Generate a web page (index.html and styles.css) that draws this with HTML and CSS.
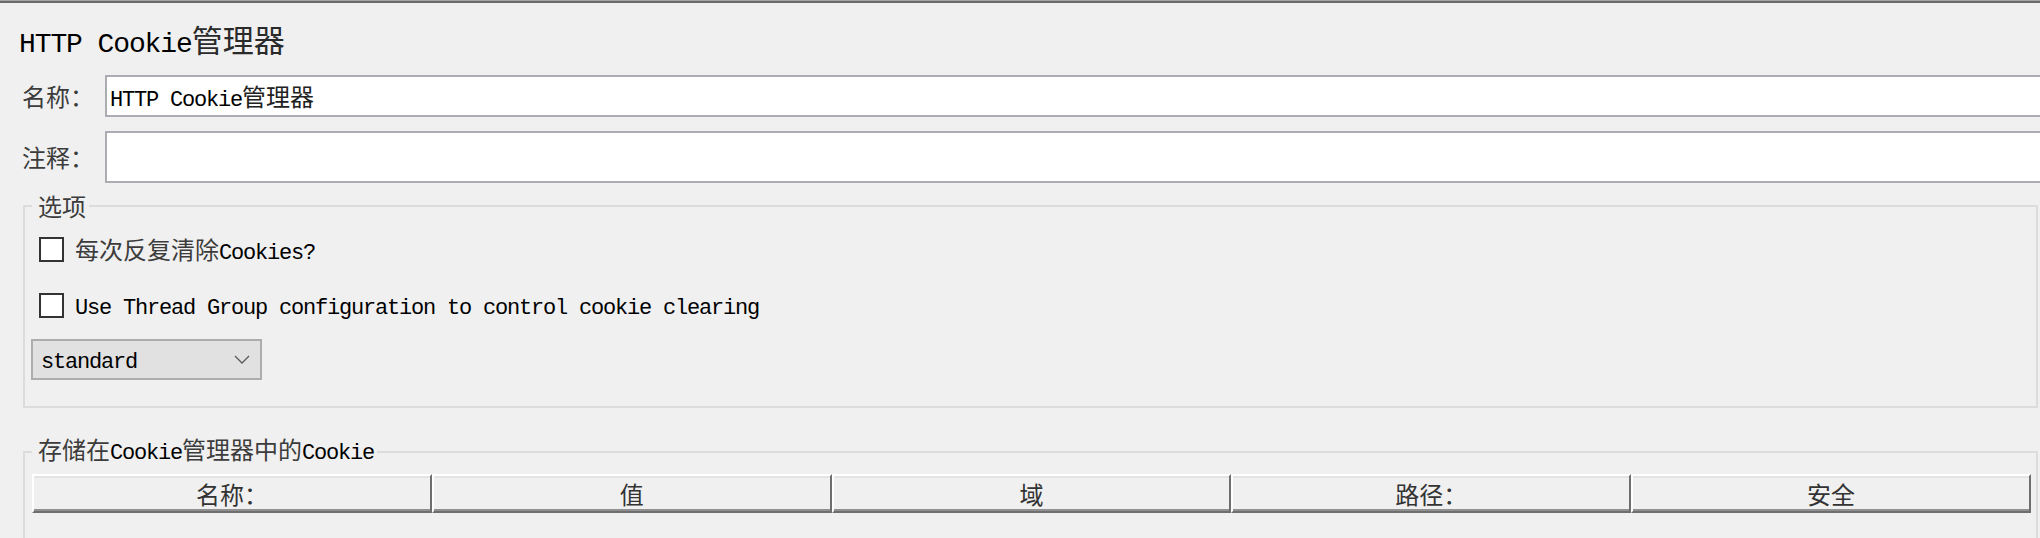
FILE: index.html
```html
<!DOCTYPE html>
<html lang="zh-CN">
<head>
<meta charset="utf-8">
<title>HTTP Cookie管理器</title>
<link rel="stylesheet" href="styles.css">
</head>
<body>
<div class="topline"></div>
<div class="title"><span class="t"><span>HTTP Cookie</span><span class="c">管理器</span></span></div>
<div class="row r1">
  <label class="lbl c">名称：</label>
  <div class="field"><span class="t"><span>HTTP Cookie</span><span class="c">管理器</span></span></div>
</div>
<div class="row r2">
  <label class="lbl c">注释：</label>
  <div class="field tall"></div>
</div>
<fieldset class="group g1">
  <legend class="c">选项</legend>
  <div class="check cb1"><span class="box"></span><span class="txt"><span class="c">每次反复清除</span><span>Cookies?</span></span></div>
  <div class="check cb2"><span class="box"></span><span class="txt lat">Use Thread Group configuration to control cookie clearing</span></div>
  <div class="combo"><span class="t lat">standard</span><svg class="chev" width="16" height="9" viewBox="0 0 16 9"><polyline points="1,1 8,8 15,1" fill="none" stroke="#5a5a5a" stroke-width="1.3"/></svg></div>
</fieldset>
<fieldset class="group g2">
  <legend><span class="c">存储在</span><span>Cookie</span><span class="c">管理器中的</span><span>Cookie</span></legend>
  <div class="thead">
    <div class="th c">名称：</div>
    <div class="th c">值</div>
    <div class="th c">域</div>
    <div class="th c">路径：</div>
    <div class="th c">安全</div>
  </div>
</fieldset>
</body>
</html>
```
FILE: styles.css
```css
html, body {
  margin: 0;
  padding: 0;
  width: 2040px;
  height: 538px;
  overflow: hidden;
  background: #f0f0f0;
}
body {
  font-family: "Liberation Mono", "Noto Sans CJK SC", monospace;
  font-size: 22px;
  line-height: 1;
  letter-spacing: -1.2px;
  color: #000;
}
.c {
  font-family: "Noto Sans CJK SC", sans-serif;
  font-size: 24px;
  letter-spacing: 0;
  color: #3c3c3c;
}
.t {
  display: block;
  white-space: nowrap;
  padding-top: 3px;
}
.lat {
  padding-top: 6px;
}
.topline {
  height: 2px;
  background: #6b6b6b;
  border-top: 1px solid #a5a5a5;
}
.title {
  height: 72px;
  display: flex;
  align-items: center;
  padding-left: 19px;
  font-size: 28px;
  letter-spacing: -1.1px;
}
.title .c {
  font-size: 31px;
  color: #2a2a2a;
}
.row {
  display: flex;
  align-items: center;
  padding-left: 22px;
}
.r2 {
  margin-top: 14px;
}
.lbl {
  width: 83px;
  flex: none;
}
.field {
  flex: 1;
  height: 42px;
  box-sizing: border-box;
  border: 2px solid #abadb3;
  background: #fff;
  margin-right: -10px;
  display: flex;
  align-items: center;
  padding-left: 3px;
}
.field .c {
  color: #222;
}
.field.tall {
  height: 52px;
}
.group {
  margin: 0 2px 0 23px;
  border: 2px solid #dcdcdc;
  padding: 0;
  min-width: 0;
}
.group legend {
  line-height: 24px;
  padding: 0 3px 0 6px;
  margin-left: 7px;
  white-space: nowrap;
}
.g1 {
  margin-top: 11px;
  padding-bottom: 26px;
}
.g2 {
  margin-top: 29px;
  padding-bottom: 120px;
}
.check {
  display: flex;
  align-items: center;
  height: 25px;
  margin-left: 14px;
}
.cb1 {
  margin-top: 19px;
}
.cb2 {
  margin-top: 31px;
}
.box {
  width: 25px;
  height: 25px;
  box-sizing: border-box;
  border: 2px solid #333;
  background: #fff;
  flex: none;
}
.txt {
  margin-left: 11px;
  display: block;
  white-space: nowrap;
  padding-top: 3px;
}
.txt.lat,
.t.lat {
  padding-top: 6px;
}
.combo {
  margin: 21px 0 0 6px;
  width: 231px;
  height: 41px;
  box-sizing: border-box;
  border: 2px solid #adadad;
  background: #e1e1e1;
  display: flex;
  align-items: center;
  padding-left: 8px;
}
.chev {
  margin-left: auto;
  margin-right: 10px;
}
.thead {
  margin: 8px 5px 0 7px;
  display: grid;
  grid-template-columns: repeat(5, 1fr);
}
.th {
  height: 39px;
  box-sizing: border-box;
  border: 2px solid;
  border-color: #fff #6e6e6e #6e6e6e #fff;
  box-shadow: inset 0 2px 0 #e3e3e3, inset 0 -2px 0 #909090;
  display: flex;
  align-items: center;
  justify-content: center;
  color: #333;
}
```
